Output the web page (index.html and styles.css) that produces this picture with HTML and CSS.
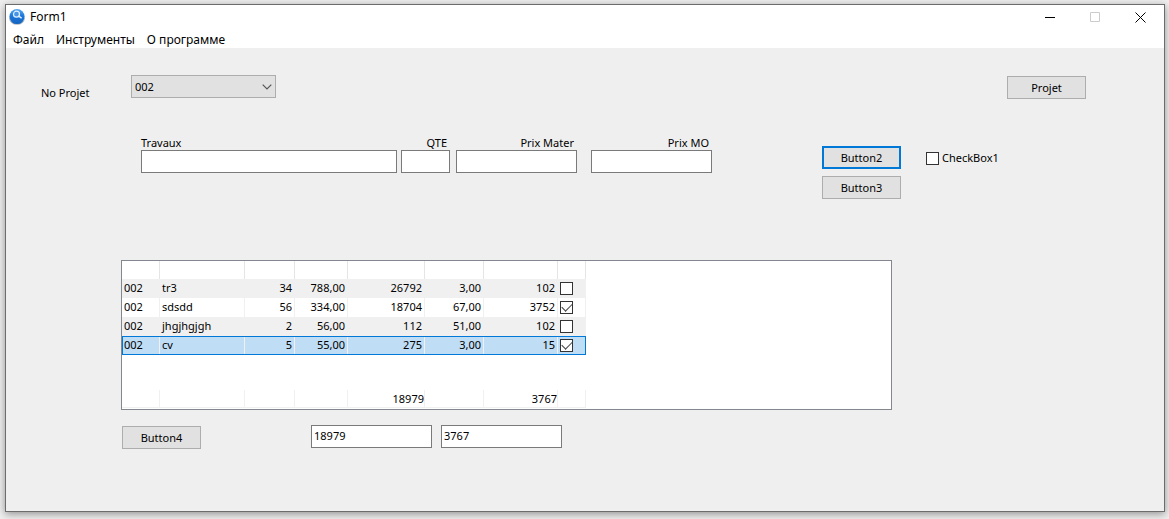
FILE: index.html
```html
<!DOCTYPE html>
<html lang="ru">
<head>
<meta charset="utf-8">
<title>Form1</title>
<link rel="stylesheet" href="styles.css">
</head>
<body>
<div class="window">
  <header class="titlebar">
    <svg class="app-icon" viewBox="0 0 16 16" aria-hidden="true">
      <defs>
        <linearGradient id="ball" x1="0" y1="0" x2="0" y2="1">
          <stop offset="0" stop-color="#5aa9ee"/>
          <stop offset=".45" stop-color="#1b78dc"/>
          <stop offset="1" stop-color="#1463bf"/>
        </linearGradient>
      </defs>
      <ellipse cx="8" cy="9.5" rx="7.8" ry="6.3" fill="#a9b4c0"/>
      <circle cx="8" cy="7.6" r="7.5" fill="url(#ball)"/>
      <circle cx="7.5" cy="5.2" r="3" fill="#4796e6" stroke="#dff0ff" stroke-width="1.2"/>
      <path d="M9.8 7.200 L12.200 8.800" stroke="#dff0ff" stroke-width="1.5" stroke-linecap="round"/>
    </svg>
    <span class="title">Form1</span>
    <div class="controls">
      <button class="control" type="button" aria-label="Minimize"><svg viewBox="0 0 11 11"><path d="M0 5.5H10" /></svg></button>
      <button class="control" type="button" aria-label="Maximize" disabled><svg viewBox="0 0 11 11"><path d="M.5 .5H9.500V9.500H.5Z"/></svg></button>
      <button class="control" type="button" aria-label="Close"><svg viewBox="0 0 11 11"><path d="M.5 .5L10.500 10.500M10.500 .5L.5 10.500"/></svg></button>
    </div>
  </header>
  <nav class="menu">
    <a href="#file">Файл</a>
    <a href="#tools">Инструменты</a>
    <a href="#about">О программе</a>
  </nav>
  <main class="form">
    <section class="project-row">
      <label class="project-label" for="project">No Projet</label>
      <div class="combo">
        <select id="project"><option>002</option></select>
        <svg class="chevron" viewBox="0 0 10 6" aria-hidden="true"><path d="M.7 .7L5 5L9.300 .7"/></svg>
      </div>
      <button class="button project-button" type="button">Projet</button>
    </section>

    <section class="entry-row">
      <div class="field travaux"><label for="travaux">Travaux</label><input id="travaux" type="text"></div>
      <div class="field qte"><label for="qte">QTE</label><input id="qte" type="text"></div>
      <div class="field mater"><label for="mater">Prix Mater</label><input id="mater" type="text"></div>
      <div class="field mo"><label for="mo">Prix MO</label><input id="mo" type="text"></div>
      <div class="actions">
        <button class="button default" type="button">Button2</button>
        <button class="button" type="button">Button3</button>
      </div>
      <label class="check-label"><input class="check" type="checkbox">CheckBox1</label>
    </section>

    <section class="panel">
      <table class="grid">
        <colgroup><col class="c1"><col class="c2"><col class="c3"><col class="c4"><col class="c5"><col class="c6"><col class="c7"><col class="c8"></colgroup>
        <thead><tr><th></th><th></th><th></th><th></th><th></th><th></th><th></th><th></th></tr></thead>
        <tbody>
          <tr><td>002</td><td>tr3</td><td>34</td><td>788,00</td><td>26792</td><td>3,00</td><td>102</td><td><input class="check" type="checkbox" aria-label="tr3"></td></tr>
          <tr><td>002</td><td>sdsdd</td><td>56</td><td>334,00</td><td>18704</td><td>67,00</td><td>3752</td><td><input class="check" type="checkbox" aria-label="sdsdd" checked></td></tr>
          <tr><td>002</td><td>jhgjhgjgh</td><td>2</td><td>56,00</td><td>112</td><td>51,00</td><td>102</td><td><input class="check" type="checkbox" aria-label="jhgjhgjgh"></td></tr>
          <tr class="selected"><td>002</td><td>cv</td><td>5</td><td>55,00</td><td>275</td><td>3,00</td><td>15</td><td><input class="check" type="checkbox" aria-label="cv" checked></td></tr>
        </tbody>
      </table>
      <table class="grid totals">
        <colgroup><col class="c1"><col class="c2"><col class="c3"><col class="c4"><col class="c5"><col class="c6"><col class="c7"><col class="c8"></colgroup>
        <tbody><tr><td></td><td></td><td></td><td></td><td>18979</td><td></td><td>3767</td><td></td></tr></tbody>
      </table>
    </section>

    <section class="bottom-row">
      <button class="button" type="button">Button4</button>
      <input class="sum first-sum" type="text" value="18979" aria-label="Prix Mater total">
      <input class="sum" type="text" value="3767" aria-label="Prix MO total">
    </section>
  </main>
</div>
</body>
</html>
```

FILE: styles.css
```css
* { box-sizing: border-box; }

body {
  margin: 0;
  min-height: 100vh;
  padding: 4px 4px 7px 5px;
  display: flex;
  flex-direction: column;
  background: #efefef;
  color: #000;
  font: 11px/14px "Noto Sans", "Open Sans", sans-serif;
}

button, input, select { font: inherit; color: inherit; margin: 0; border-radius: 0; }

.window {
  flex: 1;
  display: flex;
  flex-direction: column;
  border: 1px solid #6c6c6c;
  background: #efefef;
  box-shadow: 0 2px 8px rgba(0, 0, 0, .4);
}

.titlebar { display: flex; align-items: center; height: 24px; padding: 0 1px 0 3px; background: #fff; }
.app-icon { width: 16px; height: 16px; margin-right: 5px; }
.title { font-size: 12px; }
.controls { display: flex; margin-left: auto; }
.control { width: 45px; height: 24px; padding: 0; border: 0; background: none; display: flex; align-items: center; justify-content: center; }
.control svg { width: 11px; height: 11px; fill: none; stroke: #000; }
.control:disabled svg { stroke: #ccc; }

.menu { display: flex; gap: 12px; height: 19px; padding: 4px 7px 0; background: #fff; font-size: 12px; }
.menu a { color: inherit; text-decoration: none; }

.form { flex: 1; }

.project-row { display: flex; align-items: flex-start; padding: 27px 78px 0 35px; }
.project-label { width: 90px; padding-top: 11px; }
.combo { position: relative; width: 145px; }
.combo select { appearance: none; display: block; width: 100%; height: 23px; padding: 0 3px; border: 1px solid #adadad; background: #e1e1e1; }
.chevron { position: absolute; right: 4px; top: 9px; width: 10px; height: 6px; fill: none; stroke: #555; stroke-width: 1.2; pointer-events: none; }

.button { width: 79px; height: 23px; padding: 0; border: 1px solid #adadad; background: #e1e1e1; }
.button.default { border: 2px solid #0078d7; }
.project-button { margin: 1px 0 0 auto; }

.entry-row { display: flex; align-items: flex-start; padding: 37px 158px 0 135px; margin-top: -1px; }
.field { display: flex; flex-direction: column; text-align: right; }
.field label { padding-right: 3px; }
.field input { width: 100%; height: 23px; padding: 0 2px; border: 1px solid #7a7a7a; background: #fff; }
.travaux { flex: 1; text-align: left; }
.qte { width: 49px; margin-left: 4px; }
.mater { width: 121px; margin-left: 6px; }
.mo { width: 121px; margin-left: 14px; }
.actions { display: flex; flex-direction: column; gap: 7px; margin: 10px 25px 0 110px; }
.check-label { display: flex; align-items: center; gap: 3px; width: 80px; margin-top: 15px; }

.check { appearance: none; display: block; flex: none; width: 13px; height: 13px; border: 1px solid #333; background: #fff; }
.check:checked { display: flex; align-items: center; justify-content: center; }
.check:checked::before { content: ""; width: 9px; height: 5px; margin-bottom: 3px; border: solid #444; border-width: 0 0 1px 1px; transform: rotate(-45deg); }

.panel { display: flex; flex-direction: column; min-height: 150px; margin: 61px 272px 0 115px; padding-bottom: 1px; border: 1px solid #828790; background: #fff; }

.grid { width: 464px; table-layout: fixed; border-collapse: separate; border-spacing: 0; }
.c1 { width: 38px; }
.c2 { width: 85px; }
.c3 { width: 50px; }
.c4 { width: 53px; }
.c5 { width: 77px; }
.c6 { width: 59px; }
.c7 { width: 74px; }
.c8 { width: 28px; }
.grid th { height: 18px; padding: 0; border-right: 1px solid #e5e5e5; }
.grid td { height: 19px; padding: 0 2px 2px; border-right: 1px solid #f0f0f0; text-align: right; vertical-align: middle; }
.grid td:last-child { padding-bottom: 0; }
.grid td:nth-child(-n+2) { text-align: left; }
.grid tbody tr:nth-child(odd) { background: #f0f0f0; }
.grid tbody tr.selected { background: #bfddf5; outline: 1px solid #0078d7; outline-offset: -1px; }

.totals { margin-top: auto; }
.grid.totals tbody tr { background: #fff; }
.grid.totals td { height: 18px; padding: 0; border-bottom: 1px solid #f0f0f0; }

.bottom-row { display: flex; align-items: flex-start; padding: 15px 272px 0 116px; }
.bottom-row .button { margin-top: 1px; }
.sum { width: 121px; height: 23px; padding: 0 2px 2px; border: 1px solid #7a7a7a; background: #fff; }
.first-sum { margin: 0 9px 0 110px; }
```
